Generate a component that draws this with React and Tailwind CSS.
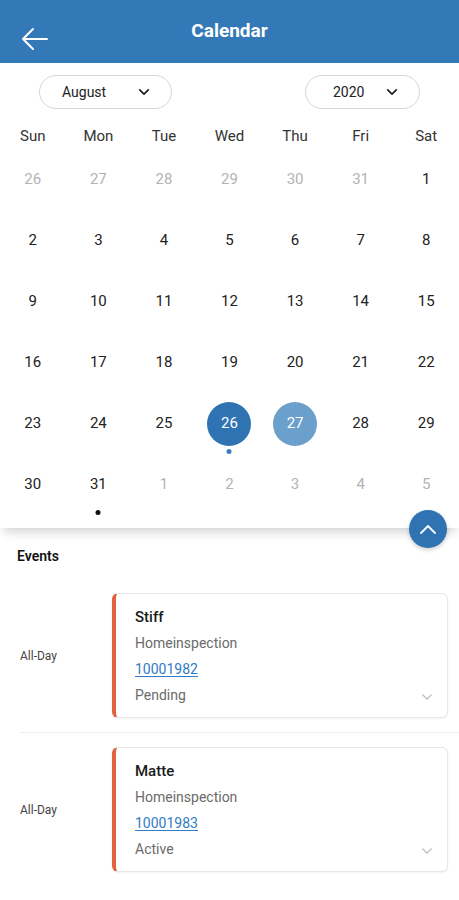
import React from "react";

const weeks = [
  [[26,0],[27,0],[28,0],[29,0],[30,0],[31,0],[1,1]],
  [[2,1],[3,1],[4,1],[5,1],[6,1],[7,1],[8,1]],
  [[9,1],[10,1],[11,1],[12,1],[13,1],[14,1],[15,1]],
  [[16,1],[17,1],[18,1],[19,1],[20,1],[21,1],[22,1]],
  [[23,1],[24,1],[25,1],[26,2],[27,3],[28,1],[29,1]],
  [[30,1],[31,4],[1,0],[2,0],[3,0],[4,0],[5,0]],
];

function Chevron({ className, w = 14, h = 9, sw = 2 }) {
  return (
    <svg width={w} height={h} viewBox="0 0 14 9" className={className}>
      <path d="M2 2 L7 7 L12 2" fill="none" stroke="currentColor" strokeWidth={sw} strokeLinecap="round" strokeLinejoin="round" />
    </svg>
  );
}

function DayCell({ d, t }) {
  if (t === 2 || t === 3) {
    return (
      <div className="relative flex h-[61px] items-center justify-center">
        <div className={`flex h-[44px] w-[44px] items-center justify-center rounded-full text-[15px] text-white ${t === 2 ? "bg-[#2f73b3]" : "bg-[#6b9fcc]"}`}>
          {d}
        </div>
        {t === 2 && <div className="absolute left-1/2 top-[56px] h-[5px] w-[5px] -translate-x-1/2 rounded-full bg-[#3a7cc0]" />}
      </div>
    );
  }
  return (
    <div className="relative flex h-[61px] items-center justify-center">
      <span className={`text-[15px] ${t === 0 ? "text-[#b3b3b3]" : "text-[#222]"}`}>{d}</span>
      {t === 4 && <div className="absolute left-1/2 top-[56px] h-[5px] w-[5px] -translate-x-1/2 rounded-full bg-[#111]" />}
    </div>
  );
}

function EventCard({ name, num, status }) {
  return (
    <div className="flex items-center py-[14px]">
      <div className="w-[92px] text-[12px] text-[#444]">All-Day</div>
      <div className="w-[336px] rounded-[6px] border border-[#e6e6e6] border-l-[4px] border-l-[#e2623e] pb-[9px] pl-[19px] pr-[14px] pt-[10px] shadow-[0_1px_2px_rgba(0,0,0,0.05)]">
        <div className="flex h-[26px] items-center text-[15px] font-medium text-[#1a1a1a]">{name}</div>
        <div className="flex h-[26px] items-center text-[14px] text-[#6b6b6b]">Homeinspection</div>
        <div className="flex h-[26px] items-center text-[14px] text-[#2f7bc6] underline underline-offset-2">{num}</div>
        <div className="flex h-[26px] items-center justify-between text-[14px] text-[#6b6b6b]">
          <span>{status}</span>
          <Chevron className="mt-[3px] text-[#b8b8b8]" w={12} h={8} sw={1.5} />
        </div>
      </div>
    </div>
  );
}

export default function App() {
  return (
    <div className="min-h-[900px] w-[459px] bg-white font-['Roboto',sans-serif]">
      <div className="relative flex h-[63px] items-center justify-center bg-[#3479b7]">
        <svg width="28" height="24" viewBox="0 0 28 24" className="absolute left-[21px] top-[27px] text-white">
          <path d="M26 12 H2 M12 2 L2 12 L12 22" fill="none" stroke="currentColor" strokeWidth="2" strokeLinecap="round" strokeLinejoin="round" />
        </svg>
        <span className="text-[19px] font-bold text-white">Calendar</span>
      </div>

      <div className="relative z-10 bg-white pb-[13px] shadow-[0_8px_10px_-4px_rgba(0,0,0,0.18)]">
        <div className="flex justify-between pl-[39px] pr-[39px] pt-[12px]">
          <div className="flex h-[34px] w-[133px] items-center rounded-full border border-[#d6d6d6] pl-[22px] pr-[21px] text-[14px] text-[#222]">
            <span className="flex-1">August</span>
            <Chevron className="text-[#222]" w={12} h={8} />
          </div>
          <div className="flex h-[34px] w-[115px] items-center rounded-full border border-[#d6d6d6] pl-[27px] pr-[21px] text-[14px] text-[#222]">
            <span className="flex-1">2020</span>
            <Chevron className="text-[#222]" w={12} h={8} />
          </div>
        </div>
        <div className="mt-[14px] grid h-[26px] grid-cols-7 items-center text-center text-[15px] text-[#333]">
          {["Sun","Mon","Tue","Wed","Thu","Fri","Sat"].map((d) => (
            <div key={d}>{d}</div>
          ))}
        </div>
        {weeks.map((w, i) => (
          <div key={i} className="grid grid-cols-7">
            {w.map(([d, t], j) => (
              <DayCell key={j} d={d} t={t} />
            ))}
          </div>
        ))}
        <div className="absolute right-[12px] top-[calc(100%-18px)] flex h-[38px] w-[38px] items-center justify-center rounded-full bg-[#2f73b3] shadow-[0_2px_4px_rgba(0,0,0,0.2)]">
          <svg width="18" height="11" viewBox="0 0 18 11" className="text-white">
            <path d="M2 9 L9 2 L16 9" fill="none" stroke="currentColor" strokeWidth="1.8" strokeLinecap="round" strokeLinejoin="round" />
          </svg>
        </div>
      </div>

      <div className="pl-[17px] pt-[18px] text-[14px] font-semibold text-[#111]">Events</div>
      <div className="ml-[20px] mt-[12px]">
        <div className="border-b border-[#ececec]">
          <EventCard name="Stiff" num="10001982" status="Pending" />
        </div>
        <EventCard name="Matte" num="10001983" status="Active" />
      </div>
    </div>
  );
}
